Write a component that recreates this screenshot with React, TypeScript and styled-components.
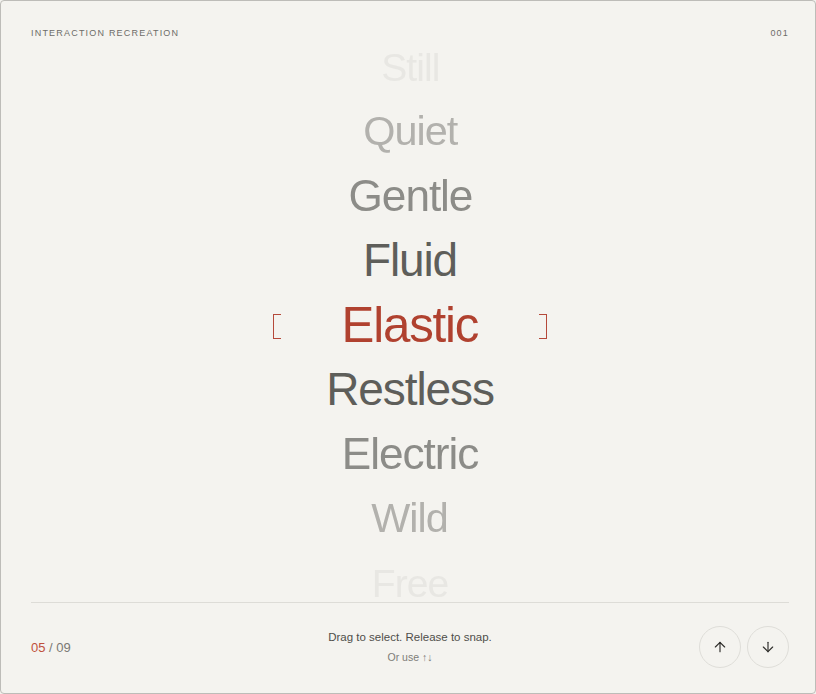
import styled, { createGlobalStyle } from "styled-components";
import { ArrowUp, ArrowDown } from "lucide-react";

const WORDS = [
  "Still",
  "Quiet",
  "Gentle",
  "Fluid",
  "Elastic",
  "Restless",
  "Electric",
  "Wild",
  "Free",
];

const ACTIVE = 4;

// how each ring away from the selected word looks
const RINGS = [
  { scale: 1.07, color: "#b0412f", blur: 0 },
  { scale: 1, color: "#5e5e5a", blur: 0 },
  { scale: 0.96, color: "#8c8c88", blur: 0 },
  { scale: 0.9, color: "#b2b1ad", blur: 0 },
  { scale: 0.85, color: "#e8e7e3", blur: 0.6 },
];

const GlobalStyle = createGlobalStyle`
  html, body {
    margin: 0;
    padding: 0;
    background: #f4f3ef;
  }
  * {
    box-sizing: border-box;
  }
`;

export default function App() {
  return (
    <>
      <GlobalStyle />
      <Frame>
        <Header>
          <Eyebrow>Interaction Recreation</Eyebrow>
          <Eyebrow>001</Eyebrow>
        </Header>

        <Wheel>
          <WordList>
            {WORDS.map((word, index) => {
              const ring = RINGS[Math.min(Math.abs(index - ACTIVE), 4)];
              return (
                <WordRow key={word}>
                  {index === ACTIVE && <Bracket $side="left" />}
                  <Word
                    $color={ring.color}
                    $blur={ring.blur}
                    style={{ transform: `scale(${ring.scale})` }}
                  >
                    {word}
                  </Word>
                  {index === ACTIVE && <Bracket $side="right" />}
                </WordRow>
              );
            })}
          </WordList>
        </Wheel>

        <Footer>
          <Counter>
            <CounterCurrent>05</CounterCurrent> / 09
          </Counter>
          <Hint>
            <HintMain>Drag to select. Release to snap.</HintMain>
            <HintSub>Or use ↑↓</HintSub>
          </Hint>
          <Controls>
            <RoundButton aria-label="Previous">
              <ArrowUp size={16} strokeWidth={1.75} />
            </RoundButton>
            <RoundButton aria-label="Next">
              <ArrowDown size={16} strokeWidth={1.75} />
            </RoundButton>
          </Controls>
        </Footer>
      </Frame>
    </>
  );
}

const Frame = styled.div`
  height: 100vh;
  display: flex;
  flex-direction: column;
  padding: 0 26px 0 30px;
  border: 1px solid #bdbcb8;
  border-radius: 4px;
  background: #f4f3ef;
  font-family: "Liberation Sans", Arial, sans-serif;
`;

const Header = styled.header`
  height: 47px;
  flex: none;
  display: flex;
  justify-content: space-between;
  align-items: flex-start;
  padding-top: 27px;
`;

const Eyebrow = styled.span`
  font-size: 9px;
  line-height: 10px;
  letter-spacing: 1.2px;
  text-transform: uppercase;
  color: #6d6c68;
`;

const Wheel = styled.div`
  flex: 1;
  min-height: 0;
  display: flex;
  flex-direction: column;
  justify-content: center;
  align-items: center;
  overflow: hidden;
  border-bottom: 1px solid #dddcd7;
`;

const WordList = styled.div`
  flex: none;
  display: flex;
  flex-direction: column;
  align-items: center;
`;

const WordRow = styled.div`
  height: 64.5px;
  width: 276px;
  display: flex;
  align-items: center;
  justify-content: center;
  position: relative;
`;

const Word = styled.span<{ $color: string; $blur: number }>`
  font-size: 46px;
  line-height: 64.5px;
  letter-spacing: -1.1px;
  color: ${(p) => p.$color};
  filter: ${(p) => (p.$blur ? `blur(${p.$blur}px)` : "none")};
  white-space: nowrap;
`;

const Bracket = styled.span<{ $side: "left" | "right" }>`
  position: absolute;
  top: 21px;
  ${(p) => (p.$side === "left" ? "left: 1px;" : "right: 1px;")}
  width: 8px;
  height: 25px;
  border: 1.5px solid #b5493a;
  ${(p) => (p.$side === "left" ? "border-right: none;" : "border-left: none;")}
`;

const Footer = styled.footer`
  flex: 1;
  max-height: 90px;
  display: grid;
  grid-template-columns: 1fr auto 1fr;
  align-items: center;
  padding-bottom: 2px;
`;

const Counter = styled.div`
  font-size: 13px;
  color: #7a7974;
`;

const CounterCurrent = styled.span`
  color: #c0503c;
`;

const Hint = styled.div`
  display: flex;
  flex-direction: column;
  align-items: center;
  gap: 8px;
`;

const HintMain = styled.span`
  font-size: 11.5px;
  color: #4f4e4a;
`;

const HintSub = styled.span`
  font-size: 10.5px;
  color: #7d7c78;
`;

const Controls = styled.div`
  display: flex;
  justify-content: flex-end;
  gap: 6px;
`;

const RoundButton = styled.button`
  width: 42px;
  height: 42px;
  border-radius: 50%;
  border: 1px solid #dfded9;
  background: transparent;
  color: #2f2e2b;
  display: flex;
  align-items: center;
  justify-content: center;
  padding: 0;
  cursor: pointer;
`;
